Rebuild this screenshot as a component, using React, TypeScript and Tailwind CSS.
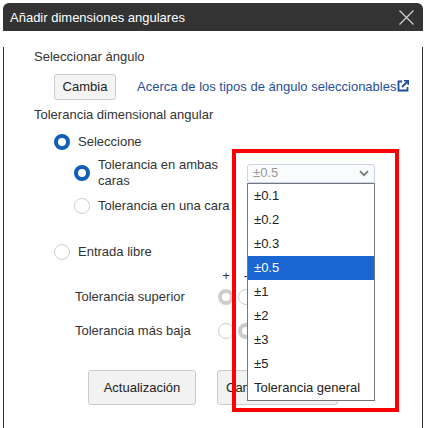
export default function App() {
  const options = ["±0.1", "±0.2", "±0.3", "±0.5", "±1", "±2", "±3", "±5", "Tolerancia general"];

  const RadioOn = () => (
    <span className="block w-[16px] h-[16px] rounded-full border-[4px] border-[#0f5fb8] bg-white shrink-0" />
  );
  const RadioOff = () => (
    <span className="block w-[16px] h-[16px] rounded-full border border-[#cfcfcf] bg-white shrink-0" />
  );
  const RadioGray = () => (
    <span className="block w-[16px] h-[16px] rounded-full border-[4px] border-[#cccccc] bg-white shrink-0" />
  );

  return (
    <div
      className="relative w-[429px] h-[428px] bg-white pt-[3px] pl-[3px] text-[13px] text-[#333]"
      style={{ fontFamily: '"Liberation Sans", Arial, sans-serif' }}
    >
      {/* Dialog */}
      <div className="w-[420px]">
        {/* Header */}
        <div className="h-[28px] bg-[#333333] rounded-t-[6px] flex items-center justify-between pl-[7px] pr-[9px]">
          <span className="text-white text-[13px] leading-none">Añadir dimensiones angulares</span>
          <svg width="15" height="15" viewBox="0 0 15 15">
            <path d="M0.5 0.5L14.5 14.5M14.5 0.5L0.5 14.5" stroke="#d0d0d0" strokeWidth="1.3" />
          </svg>
        </div>

        {/* Body */}
        <div className="h-[390px] border border-t-0 border-[#333333] rounded-b-[6px] pl-[30px]">
          <div className="mt-[16px] h-[20px] leading-[20px]">Seleccionar ángulo</div>

          <div className="mt-[7px] h-[26px] flex items-center">
            <button className="ml-[20px] w-[62px] h-[26px] bg-[#f4f4f4] border border-[#cccccc] rounded-[3px] text-[#222] text-[13px]">
              Cambia
            </button>
            <a className="ml-[21px] text-[#1f4f9c] flex items-center">
              Acerca de los tipos de ángulo seleccionables
              <svg width="12" height="12" viewBox="0 0 12 12" className="ml-[1px] -mt-[3px]">
                <path d="M5 1.5H1.5v9h9V7" fill="none" stroke="#1f4f9c" strokeWidth="1.8" />
                <path d="M5 7L10.5 1.5" stroke="#1f4f9c" strokeWidth="1.8" />
                <path d="M7 0.8h4.2V5" fill="none" stroke="#1f4f9c" strokeWidth="1.6" />
              </svg>
            </a>
          </div>

          <div className="mt-[5px] h-[20px] leading-[20px]">Tolerancia dimensional angular</div>

          {/* Seleccione */}
          <div className="mt-[7px] h-[20px] flex items-center ml-[20px] gap-[8px]">
            <RadioOn />
            <span>Seleccione</span>
          </div>

          {/* Tolerancia en ambas caras + select */}
          <div className="mt-[5px] h-[32px] flex items-center ml-[40px]">
            <RadioOn />
            <span className="ml-[8px] w-[140px] leading-[16px]">Tolerancia en ambas caras</span>
            <div className="relative ml-[9px] w-[128px] h-[19px]">
              <div className="h-[19px] border border-[#c7d3f1] rounded-[3px] bg-[#fafbfc] flex items-center justify-between pl-[5px] pr-[5px] text-[#9a9a9a]">
                <span>±0.5</span>
                <svg width="10" height="7" viewBox="0 0 10 7">
                  <path d="M1 1.2L5 5.2L9 1.2" fill="none" stroke="#7a7a7a" strokeWidth="1.8" />
                </svg>
              </div>
              {/* Open list */}
              <div className="absolute left-0 top-[19px] w-[128px] border border-[#767676] bg-white z-10">
                {options.map((o) => (
                  <div
                    key={o}
                    className={
                      o === "±0.5"
                        ? "h-[24px] leading-[24px] pl-[6px] bg-[#1a66d2] text-white"
                        : "h-[24px] leading-[24px] pl-[6px] text-[#222]"
                    }
                  >
                    {o}
                  </div>
                ))}
              </div>
            </div>
          </div>

          {/* Tolerancia en una cara */}
          <div className="mt-[9px] h-[16px] flex items-center ml-[40px] gap-[8px]">
            <RadioOff />
            <span className="leading-[16px]">Tolerancia en una cara</span>
          </div>

          {/* Entrada libre */}
          <div className="mt-[28px] h-[20px] flex items-center ml-[20px] gap-[8px]">
            <RadioOff />
            <span>Entrada libre</span>
          </div>

          {/* + / - */}
          <div className="mt-[6px] h-[16px] flex items-center ml-[184px] gap-[4px] leading-[16px]">
            <span className="w-[16px] text-center">+</span>
            <span className="w-[16px] text-center">-</span>
          </div>

          <div className="mt-[3px] h-[20px] flex items-center ml-[41px]">
            <span className="w-[143px]">Tolerancia superior</span>
            <div className="flex gap-[4px]">
              <RadioGray />
              <RadioOff />
            </div>
          </div>

          <div className="mt-[14px] h-[20px] flex items-center ml-[41px]">
            <span className="w-[143px]">Tolerancia más baja</span>
            <div className="flex gap-[4px]">
              <RadioOff />
              <RadioGray />
            </div>
          </div>

          {/* Buttons */}
          <div className="mt-[29px] flex ml-[54px] gap-[21px]">
            <button className="w-[108px] h-[35px] bg-[#f2f2f2] border border-[#cccccc] rounded-[3px] text-[#222] text-[13px]">
              Actualización
            </button>
            <button className="w-[121px] h-[35px] bg-[#f2f2f2] border border-[#cccccc] rounded-[3px] text-[#222] text-[13px] text-left pl-[8px]">
              Cancelar
            </button>
          </div>
        </div>
      </div>

      {/* Red annotation box */}
      <div className="absolute left-[232px] top-[149px] w-[167px] h-[263px] border-[4px] border-[#ff0000] z-20" />
    </div>
  );
}
